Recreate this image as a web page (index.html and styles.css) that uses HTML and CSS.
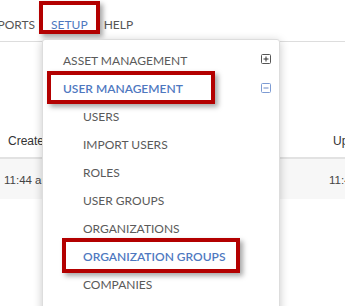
FILE: index.html
```html
<!DOCTYPE html>
<html lang="en">
<head>
  <meta charset="UTF-8" />
  <title>Setup menu</title>
  <link rel="stylesheet" href="styles.css">
</head>
<body>
  <div class="nav">
    <span class="nav-item first">REPORTS</span>
    <span class="nav-item active marked">SETUP</span>
    <span class="nav-item">HELP</span>
  </div>

  <div class="table">
    <div class="table-head">
      <div class="cell">Created</div>
      <div class="cell">Updated</div>
    </div>
    <div class="table-row">
      <div class="cell">11:44 am</div>
      <div class="cell">11:44 am</div>
    </div>
  </div>

  <ul class="dropdown">
    <li class="menu-item">
      <span class="label">ASSET MANAGEMENT</span>
      <svg class="toggle" width="10" height="10" viewBox="0 0 10 10">
        <rect x="0.5" y="0.5" width="9" height="9" rx="1" fill="none" stroke="#555"/>
        <path d="M2.5 5h5M5 2.5v5" stroke="#333" stroke-width="1"/>
      </svg>
    </li>
    <li class="menu-item open marked">
      <span class="label">USER MANAGEMENT</span>
      <svg class="toggle" width="10" height="10" viewBox="0 0 10 10">
        <rect x="0.5" y="0.5" width="9" height="9" rx="1" fill="none" stroke="#7d9bd3"/>
        <path d="M2.5 5h5" stroke="#6a88c4" stroke-width="1"/>
      </svg>
    </li>
    <li class="menu-item sub"><span class="label">USERS</span></li>
    <li class="menu-item sub"><span class="label">IMPORT USERS</span></li>
    <li class="menu-item sub"><span class="label">ROLES</span></li>
    <li class="menu-item sub"><span class="label">USER GROUPS</span></li>
    <li class="menu-item sub"><span class="label">ORGANIZATIONS</span></li>
    <li class="menu-item sub current marked"><span class="label">ORGANIZATION GROUPS</span></li>
    <li class="menu-item sub"><span class="label">COMPANIES</span></li>
  </ul>
</body>
</html>
```

FILE: styles.css
```css
body { margin: 0; background: #fff; color: #555; font-family: 'Lato', 'Open Sans', sans-serif; font-size: 12px; overflow: hidden; height: 306px; position: relative; }

.nav { display: flex; gap: 16px; height: 42px; border-bottom: 1px solid #ddd; padding-top: 18px; box-sizing: border-box; overflow: visible; }
.nav-item { display: block; line-height: 14px; height: 14px; color: #555; }
.nav-item.first { margin-left: -17px; }
.nav-item.active { color: #4e78bf; }

.marked { position: relative; }
.marked::after { content: ''; position: absolute; border: 4px solid #b30000; box-shadow: 3px 3px 5px rgba(0,0,0,0.35); pointer-events: none; }
.nav-item.marked::after { top: -17px; bottom: -2px; left: -12px; right: -12px; }

.table { font-family: 'Liberation Sans', Arial, sans-serif; color: #333; }
.table-head { display: grid; grid-template-columns: 333px 1fr; padding-top: 92px; height: 23px; border-bottom: 2px solid #e2e2e2; }
.table-head .cell { padding-left: 8px; line-height: 14px; white-space: nowrap; }
.table-head .cell + .cell { padding-left: 0; }
.table-row { display: grid; grid-template-columns: 329px 1fr; background: #f7f7f7; height: 40px; padding-top: 14px; box-sizing: border-box; color: #444; font-size: 11.5px; }
.table-row .cell { padding-left: 4px; line-height: 14px; white-space: nowrap; }
.table-row .cell + .cell { padding-left: 0; }

.dropdown { position: absolute; left: 42px; top: 39px; width: 238px; height: 300px; box-sizing: border-box; margin: 0; padding: 7px 0 0; list-style: none; background: #fff; border: 1px solid #ddd; border-radius: 3px 3px 0 0; box-shadow: 0 2px 10px rgba(0,0,0,0.22); }
.menu-item { display: flex; align-items: center; justify-content: space-between; height: 28px; padding: 0 8px 0 20px; }
.menu-item .label { line-height: 14px; color: #5a5a5a; }
.menu-item.sub { padding-left: 40px; }
.menu-item.open .label { color: #4e78bf; font-weight: 600; }
.menu-item.current .label { color: #4e78bf; font-weight: 600; }
.toggle { display: block; margin-top: -4px; }
.menu-item.open .toggle { margin-top: -2px; }

.menu-item.open::after { top: -4px; bottom: -1px; left: 4px; right: 64px; }
.menu-item.current::after { top: -5px; bottom: -2px; left: 19px; right: 39px; }
```
